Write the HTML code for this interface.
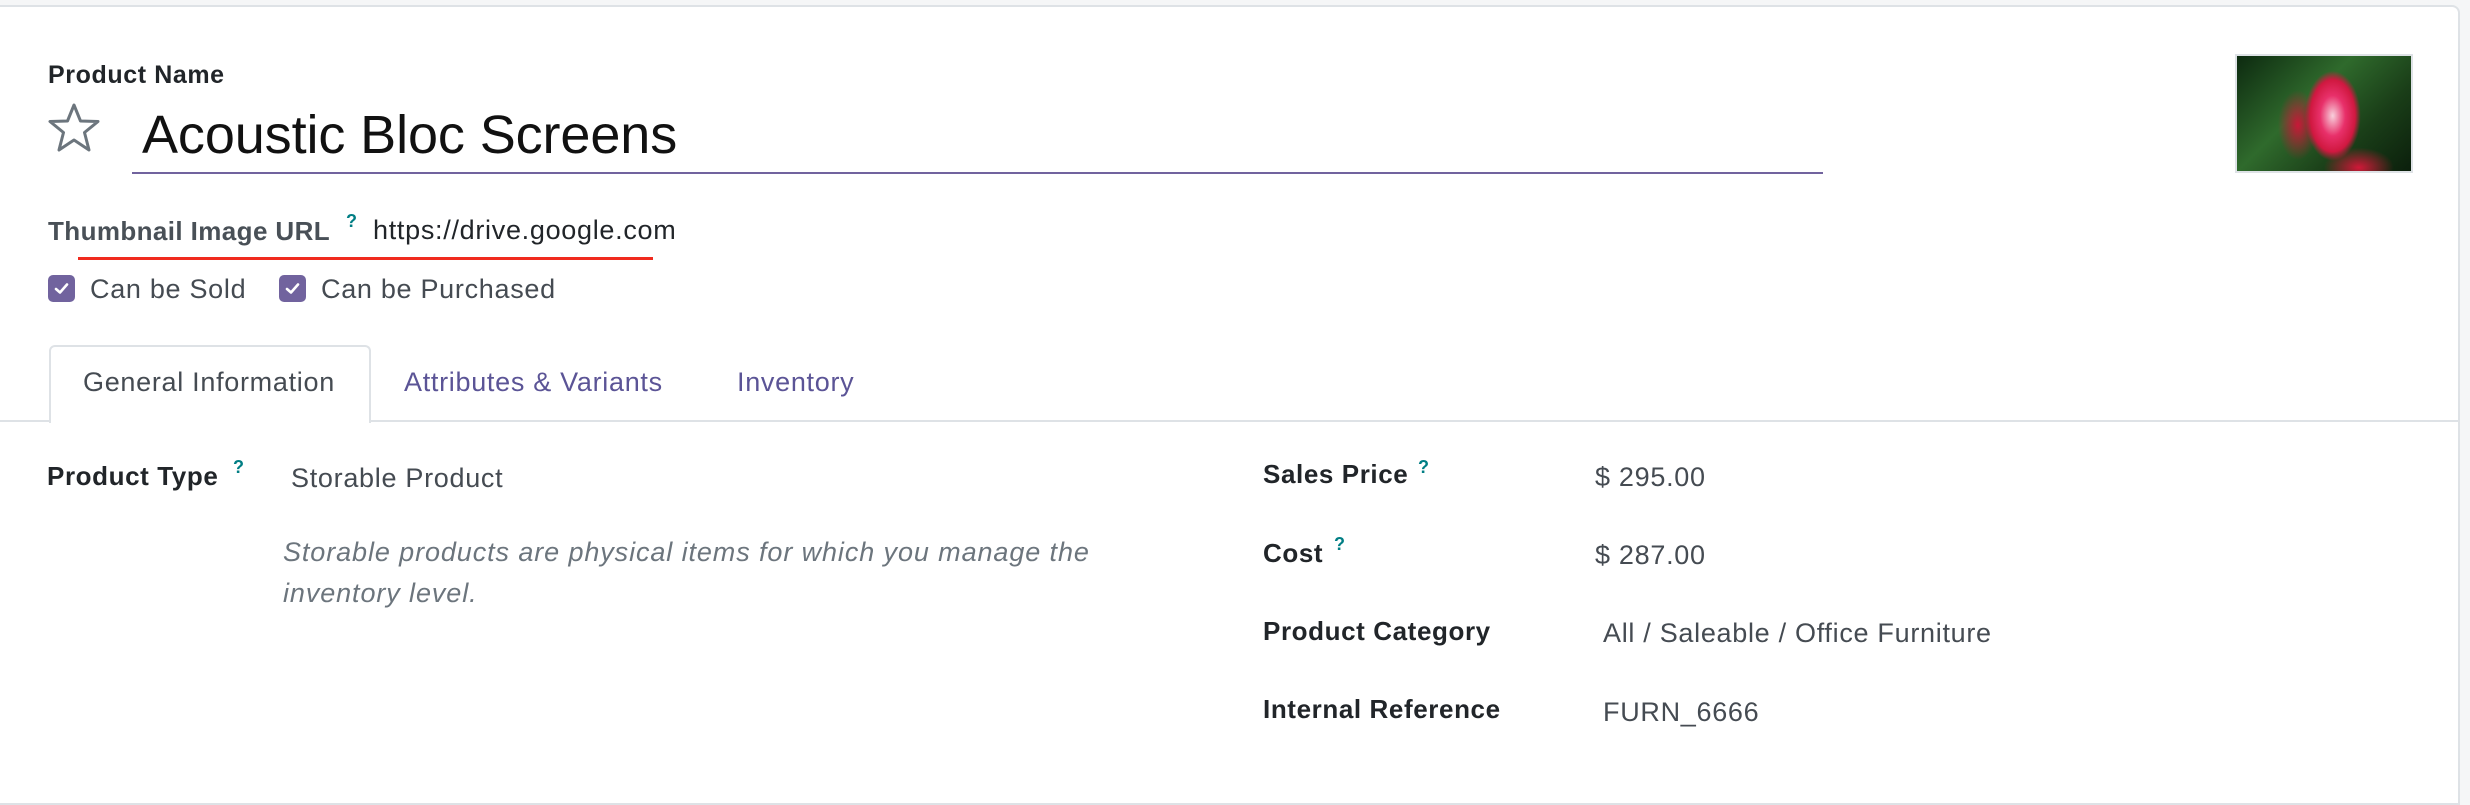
<!DOCTYPE html>
<html><head><meta charset="utf-8"><style>
*{margin:0;padding:0;box-sizing:border-box}
body{width:2470px;height:764px;background:#f5f6f7;font-family:"Liberation Sans",Arial,sans-serif;overflow:hidden;position:relative;letter-spacing:0.6px}
.card{position:absolute;left:-2px;top:5px;width:2462px;height:800px;background:#fff;border:2px solid #dee2e6;border-radius:0 8px 0 0}
.t{position:absolute;white-space:nowrap;line-height:1}
.lbl{font-weight:bold;color:#212529;font-size:26px}
.val{color:#454b52;font-size:27px;letter-spacing:0.7px}
.q{position:absolute;color:#017e84;font-size:18px;font-weight:bold;line-height:1}
.cb{position:absolute;width:27px;height:27px;background:#71639e;border-radius:5px}
.cb svg{position:absolute;left:6px;top:7px}
</style></head><body>
<div class="card"></div>
<div class="t lbl" style="left:48px;top:63px;font-size:25px">Product Name</div>
<svg style="position:absolute;left:47px;top:102px" width="54" height="52" viewBox="0 0 54 52"><path d="M27 3 L33.5 19 L51 19.5 L37.5 30.5 L42 48 L27 38 L12 48 L16.5 30.5 L3 19.5 L20.5 19 Z" fill="none" stroke="#6c757d" stroke-width="3" stroke-linejoin="round"/></svg>
<div class="t" style="left:142px;top:108px;font-size:54px;color:#111;letter-spacing:-0.1px">Acoustic Bloc Screens</div>
<div style="position:absolute;left:132px;top:172px;width:1691px;height:2px;background:#71639e"></div>
<div style="position:absolute;left:2235px;top:54px;width:178px;height:119px;border:2px solid #dee2e6;background:radial-gradient(ellipse 28px 45px at 55% 52%,#f8d0dc 0,#e8306a 45%,#d01840 80%,transparent 100%),radial-gradient(ellipse 20px 35px at 35% 60%,#c81838 0,transparent 100%),radial-gradient(ellipse 35px 20px at 70% 97%,#d01838 0,transparent 100%),linear-gradient(135deg,#0d2a10,#2f6a2c 40%,#1a3e18 70%,#0b1f0c)"></div>
<div class="t" style="left:48px;top:218px;font-size:26px;font-weight:bold;color:#495057;letter-spacing:0.4px">Thumbnail Image URL</div>
<div class="q" style="left:346px;top:212px">?</div>
<div class="t val" style="left:373px;top:217px;color:#212529">https://drive.google.com</div>
<div style="position:absolute;left:78px;top:257px;width:575px;height:3px;background:#f02a1e"></div>
<div class="cb" style="left:48px;top:275px"><svg width="15" height="13" viewBox="0 0 15 13"><path d="M2 7 L6 10.5 L13 2.5" fill="none" stroke="#fff" stroke-width="2.6" stroke-linecap="round" stroke-linejoin="round"/></svg></div>
<div class="t val" style="left:90px;top:276px">Can be Sold</div>
<div class="cb" style="left:279px;top:275px"><svg width="15" height="13" viewBox="0 0 15 13"><path d="M2 7 L6 10.5 L13 2.5" fill="none" stroke="#fff" stroke-width="2.6" stroke-linecap="round" stroke-linejoin="round"/></svg></div>
<div class="t val" style="left:321px;top:276px">Can be Purchased</div>
<div style="position:absolute;left:0;top:420px;width:2460px;height:2px;background:#dee2e6"></div>
<div style="position:absolute;left:49px;top:345px;width:322px;height:78px;background:#fff;border:2px solid #dee2e6;border-bottom:none;border-radius:6px 6px 0 0"></div>
<div class="t val" style="left:83px;top:369px;color:#454b52">General Information</div>
<div class="t val" style="left:404px;top:369px;color:#5b5496">Attributes &amp; Variants</div>
<div class="t val" style="left:737px;top:369px;color:#5b5496">Inventory</div>
<div class="t lbl" style="left:47px;top:463px">Product Type</div>
<div class="q" style="left:233px;top:458px">?</div>
<div class="t val" style="left:291px;top:465px">Storable Product</div>
<div class="t val" style="left:283px;top:539px;font-style:italic;color:#6c757d;letter-spacing:0.9px">Storable products are physical items for which you manage the</div>
<div class="t val" style="left:283px;top:580px;font-style:italic;color:#6c757d;letter-spacing:0.9px">inventory level.</div>
<div class="t lbl" style="left:1263px;top:461px">Sales Price</div>
<div class="q" style="left:1418px;top:458px">?</div>
<div class="t val" style="left:1595px;top:464px">$ 295.00</div>
<div class="t lbl" style="left:1263px;top:540px">Cost</div>
<div class="q" style="left:1334px;top:535px">?</div>
<div class="t val" style="left:1595px;top:542px">$ 287.00</div>
<div class="t lbl" style="left:1263px;top:618px">Product Category</div>
<div class="t val" style="left:1603px;top:620px">All / Saleable / Office Furniture</div>
<div class="t lbl" style="left:1263px;top:696px">Internal Reference</div>
<div class="t val" style="left:1603px;top:699px">FURN_6666</div>
</body></html>
